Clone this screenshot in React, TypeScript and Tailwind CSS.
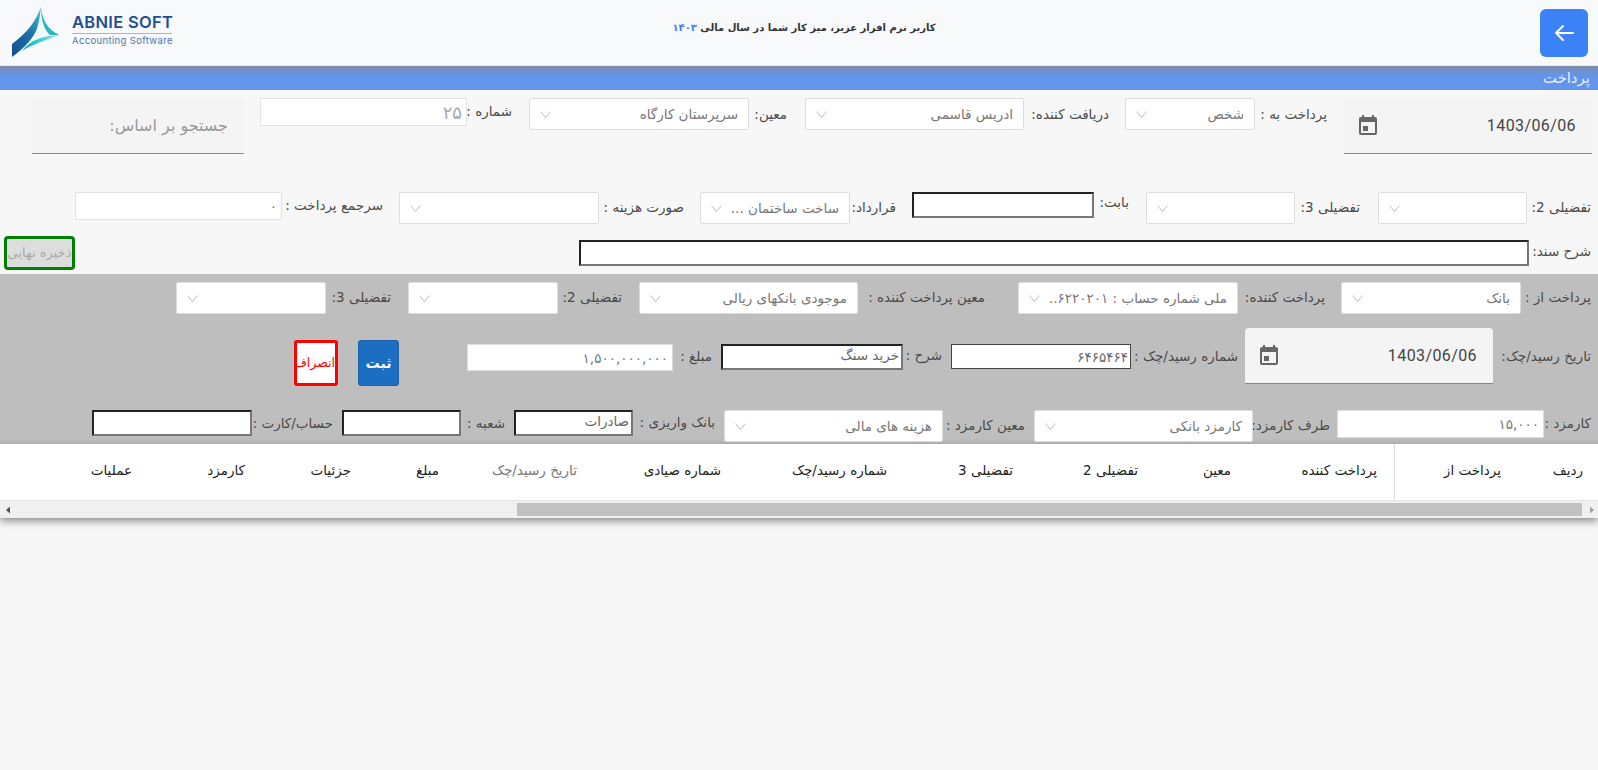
import type { ReactNode } from "react";

const FONT = { fontFamily: '"DejaVu Sans", sans-serif' };

const COLUMNS = [
  { title: "ردیف", cls: "w-[82px]" },
  { title: "پرداخت از", cls: "w-[107px] border-l border-[#ddd]" },
  { title: "پرداخت کننده", cls: "w-[163px] pr-[17px]" },
  { title: "معین", cls: "w-[93px]" },
  { title: "تفضیلی 2", cls: "w-[125px]" },
  { title: "تفضیلی 3", cls: "w-[126px]" },
  { title: "شماره رسید/چک", cls: "w-[166px]" },
  { title: "شماره صیادی", cls: "w-[144px]" },
  { title: "تاریخ رسید/چک", cls: "w-[138px] text-[#777]" },
  { title: "مبلغ", cls: "w-[88px]" },
  { title: "جزئیات", cls: "w-[106px]" },
  { title: "کارمزد", cls: "w-[113px]" },
  { title: "عملیات", cls: "w-[100px]" },
];

function Label({ className, pt = "pt-[5px]", children }: { className: string; pt?: string; children: ReactNode }) {
  return <div className={`shrink-0 whitespace-nowrap text-[13.5px] leading-5 text-[#4a4a4a] ${pt} ${className}`}>{children}</div>;
}

function Select({ className, value }: { className: string; value?: string }) {
  return (
    <div className={`flex h-8 shrink-0 items-center justify-between rounded-[2px] border border-[#ddd] bg-white pl-[10px] pr-[10px] text-[13.5px] text-[#777] ${className}`}>
      <span className="overflow-hidden whitespace-nowrap">{value}</span>
      <svg width="11" height="7" viewBox="0 0 11 7" fill="none" stroke="#bbb" strokeWidth="1" className="shrink-0">
        <polyline points="0.5,0.5 5.5,6.5 10.5,0.5" />
      </svg>
    </div>
  );
}

function Plain({ className, value }: { className: string; value?: string }) {
  return <input readOnly value={value ?? ""} className={`block shrink-0 border bg-white px-1 text-[#777] outline-none ${className}`} />;
}

function Inset({ className, value }: { className: string; value?: string }) {
  return (
    <input
      readOnly
      value={value ?? ""}
      className={`block h-[26px] shrink-0 border-2 border-t-[#222] border-l-[#222] border-r-[#777] border-b-[#777] bg-white px-0.5 pb-1 text-[13.5px] text-[#666] outline-none ${className}`}
    />
  );
}

function DateField() {
  return (
    <div className="flex h-[56px] w-[248px] shrink-0 items-center justify-between rounded-t-[4px] border-b border-[#888] bg-[#f4f4f4] pl-[12px] pr-[16px]">
      <span dir="ltr" className="text-[16px] tracking-[0.4px] text-[#444]" style={{ fontFamily: "Roboto, sans-serif" }}>1403/06/06</span>
      <svg width="24" height="24" viewBox="0 0 24 24" fill="#666" className="-scale-x-100">
        <path d="M17 12h-5v5h5v-5zM16 1v2H8V1H6v2H5c-1.11 0-1.99.9-1.99 2L3 19c0 1.1.89 2 2 2h14c1.1 0 2-.9 2-2V5c0-1.1-.9-2-2-2h-1V1h-2zm3 18H5V8h14v11z" />
      </svg>
    </div>
  );
}

function Logo() {
  return (
    <div dir="ltr" className="flex items-center">
      <svg width="62" height="60" viewBox="0 0 62 60" className="shrink-0">
        <defs>
          <linearGradient id="leftWing" x1="0.8" y1="0" x2="0.1" y2="1">
            <stop offset="0" stopColor="#35b9c9" />
            <stop offset="0.45" stopColor="#1d6fa8" />
            <stop offset="1" stopColor="#154f93" />
          </linearGradient>
          <linearGradient id="lowWing" x1="0" y1="1" x2="1" y2="0">
            <stop offset="0" stopColor="#1c9cc0" />
            <stop offset="0.5" stopColor="#27d0d0" />
            <stop offset="1" stopColor="#9fdfe0" />
          </linearGradient>
        </defs>
        <path d="M41 7C36 21 27 33 12 44L12 57C25 48 33 38 37 29C39 22 40 15 41 7Z" fill="url(#leftWing)" />
        <path d="M41 7C42 19 47 29 59 35L50 35C44 30 41 20 41 7Z" fill="#2bb6c4" />
        <path d="M59 35C44 35 30 40 22 51C33 44 46 40 59 35Z" fill="url(#lowWing)" />
      </svg>
      <div className="ml-[10px] w-[100px]" style={{ fontFamily: "Inter, sans-serif" }}>
        <div className="border-b border-[#7cc8dc] pb-[1px] text-[16.5px] font-semibold leading-5 tracking-[0.3px] whitespace-nowrap text-[#1d4f91]">ABNIE SOFT</div>
        <div className="text-[9.5px] leading-[14px] tracking-[0.35px] whitespace-nowrap text-[#4a78ad]">Accounting Software</div>
      </div>
    </div>
  );
}

export default function App() {
  return (
    <div dir="rtl" className="h-[770px] overflow-hidden bg-[#f7f7f7]" style={FONT}>
      {/* هدر */}
      <header className="flex h-[66px] items-start border-b border-[#e4e4e6] bg-[#f8f9fb]">
        <div className="flex-1 pr-[10px] pt-[9px]">
          <button className="flex h-[48px] w-[48px] items-center justify-center rounded-[6px] bg-[#3b82f6]">
            <svg width="24" height="24" viewBox="0 0 24 24" fill="none" stroke="#fff" strokeWidth="2" strokeLinecap="round" strokeLinejoin="round">
              <path d="M21 12H4M11 5l-7 7 7 7" />
            </svg>
          </button>
        </div>
        <div className="pl-[20px] pt-[18px] text-[10px] font-bold leading-5 text-[#333]">
          کاربر نرم افزار عزیز، میز کار شما در سال مالی <span className="text-[#3b82f6]">۱۴۰۳</span>
        </div>
        <div className="flex flex-1 justify-end"><Logo /></div>
      </header>

      <div className="h-6 bg-gradient-to-b from-[#7d8aa6] to-[#6495ed] to-40% pr-[8px] text-[15px] leading-6 text-[#e8eefc]">پرداخت</div>

      {/* ردیف اول */}
      <div className="mt-2 flex h-[56px] items-start pr-[6px]">
        <DateField />
        <Label pt="pt-[6px]" className="w-[89px] pr-[17px]">پرداخت به :</Label>
        <Select className="w-[130px]" value="شخص" />
        <Label pt="pt-[6px]" className="w-[101px] pr-[16px]">دریافت کننده:</Label>
        <Select className="w-[219px]" value="ادریس قاسمی" />
        <Label pt="pt-[6px]" className="w-[56px] pr-[18px]">معین:</Label>
        <Select className="w-[220px]" value="سرپرستان کارگاه" />
        <Label pt="pt-[3px]" className="w-[62px] pr-[17px]">شماره :</Label>
        <Plain className="h-7 w-[207px] border-[#e2e2e6] text-[18px] leading-none text-[#aaa]" value="۲۵" />
        <div className="mr-[16px] flex h-[56px] w-[212px] shrink-0 items-center rounded-t-[4px] border-b border-[#888] bg-[#f4f4f4] pr-4 text-[16px] text-[#999]">جستجو بر اساس:</div>
      </div>

      {/* ردیف دوم */}
      <div className="mt-[38px] flex h-8 items-start pr-[7px]">
        <Label className="w-[64px]">تفضیلی 2:</Label>
        <Select className="w-[149px]" />
        <Label className="w-[83px] pr-[18px]">تفضیلی 3:</Label>
        <Select className="w-[149px]" />
        <Label pt="pt-0" className="w-[52px] pr-[17px]">بابت:</Label>
        <Inset className="w-[182px]" />
        <Label className="w-[62px] pr-[16px]">قرارداد:</Label>
        <Select className="w-[150px]" value="ساخت ساختمان ..." />
        <Label className="w-[101px] pr-[16px]">صورت هزینه :</Label>
        <Select className="w-[200px]" />
        <Label pt="pt-[3px]" className="w-[117px] pr-[16px]">سرجمع پرداخت :</Label>
        <Plain className="h-7 w-[207px] border-[#e2e2e6] text-[13.5px]" value="۰" />
      </div>

      {/* ردیف سوم */}
      <div className="mt-3 flex h-[34px] items-start pl-1 pr-[7px]">
        <Label className="w-[62px]">شرح سند:</Label>
        <Inset className="mt-1 w-[950px]" />
        <button className="ms-auto h-[34px] w-[71px] overflow-hidden whitespace-nowrap rounded-[4px] border-[3px] border-[#008000] bg-[#ddd] text-[13px] text-[#aaa]">ذخیره نهایی</button>
      </div>

      {/* پنل خاکستری */}
      <section className="mt-1 h-[170px] bg-[#bebebe] pr-[7px] pt-2">
        <div className="flex h-8 items-start">
          <Label className="w-[70px]">پرداخت از :</Label>
          <Select className="w-[180px]" value="بانک" />
          <Label className="w-[103px] pr-[16px]">پرداخت کننده:</Label>
          <Select className="w-[220px]" value="ملی شماره حساب : ۶۲۲۰۲۰۱.." />
          <Label className="w-[160px] pr-[33px]">معین پرداخت کننده :</Label>
          <Select className="w-[219px]" value="موجودی بانکهای ریالی" />
          <Label className="w-[81px] pr-[17px]">تفضیلی 2:</Label>
          <Select className="w-[150px]" />
          <Label className="w-[82px] pr-[17px]">تفضیلی 3:</Label>
          <Select className="w-[150px]" />
        </div>

        <div className="mt-[14px] flex h-[55px] items-start">
          <Label pt="pt-[18px]" className="w-[98px]">تاریخ رسید/چک:</Label>
          <DateField />
          <Label pt="pt-[18px]" className="w-[114px] pr-[7px]">شماره رسید/چک :</Label>
          <input readOnly value="۶۴۶۵۴۶۴" className="mt-4 block h-[25px] w-[180px] shrink-0 border border-[#444] bg-white px-0.5 text-[13.5px] text-[#666] outline-none" />
          <Label pt="pt-[17px]" className="w-[48px] pr-[9px]">شرح :</Label>
          <Inset className="mt-4 w-[182px]" value="خرید سنگ" />
          <Label pt="pt-[18px]" className="w-[48px] pr-[9px]">مبلغ :</Label>
          <Plain className="mt-4 h-[27px] w-[206px] border-[#ddd] text-[13.5px]" value="۱,۵۰۰,۰۰۰,۰۰۰" />
          <button className="mr-[68px] mt-3 h-[46px] w-[41px] shrink-0 rounded-[3px] border border-[#1861ac] bg-[#1b6ec2] text-[14px] font-bold text-white">ثبت</button>
          <button className="mr-5 mt-3 h-[46px] w-[44px] shrink-0 overflow-hidden whitespace-nowrap rounded-[3px] border-[3px] border-[#ff0000] bg-white text-[12.5px] text-[#ff0000]">انصراف</button>
        </div>

        <div className="mt-[27px] flex h-8 items-start">
          <Label pt="pt-[3px]" className="w-[47px]">کارمزد :</Label>
          <Plain className="h-7 w-[207px] border-[#ddd] text-[13.5px]" value="۱۵,۰۰۰" />
          <Label className="w-[84px] pr-[7px]">طرف کارمزد:</Label>
          <Select className="w-[219px]" value="کارمزد بانکی" />
          <Label className="w-[91px] pr-[9px]">معین کارمزد :</Label>
          <Select className="w-[219px]" value="هزینه های مالی" />
          <Label pt="pt-[2px]" className="w-[91px] pr-[9px]">بانک واریزی :</Label>
          <Inset className="w-[119px]" value="صادرات" />
          <Label pt="pt-[3px]" className="w-[53px] pr-[9px]">شعبه :</Label>
          <Inset className="w-[119px]" />
          <Label pt="pt-[3px]" className="w-[90px] pr-[9px]">حساب/کارت :</Label>
          <Inset className="w-[160px]" />
        </div>
      </section>

      {/* جدول */}
      <section className="shadow-[0_3px_8px_rgba(0,0,0,0.45)]">
        <div className="flex h-[57px] items-stretch border-b border-[#e4e4e4] bg-white pr-[15px] text-[13.5px] text-[#222]">
          {COLUMNS.map((col) => (
            <div key={col.title} className={`flex shrink-0 items-center whitespace-nowrap pb-[3px] ${col.cls}`}>{col.title}</div>
          ))}
        </div>
        <div dir="ltr" className="flex h-[17px] items-center bg-[#f0f0f0]">
          <svg width="10" height="10" viewBox="0 0 10 10" className="ml-[3px] shrink-0"><polygon points="7,1.5 7,8.5 3,5" fill="#505050" /></svg>
          <div className="ml-[504px] h-[13px] w-[1065px] shrink-0 bg-[#c1c1c1]" />
          <svg width="10" height="10" viewBox="0 0 10 10" className="ml-[5px] shrink-0"><polygon points="3,1.5 3,8.5 7,5" fill="#a3a3a3" /></svg>
        </div>
      </section>
    </div>
  );
}
